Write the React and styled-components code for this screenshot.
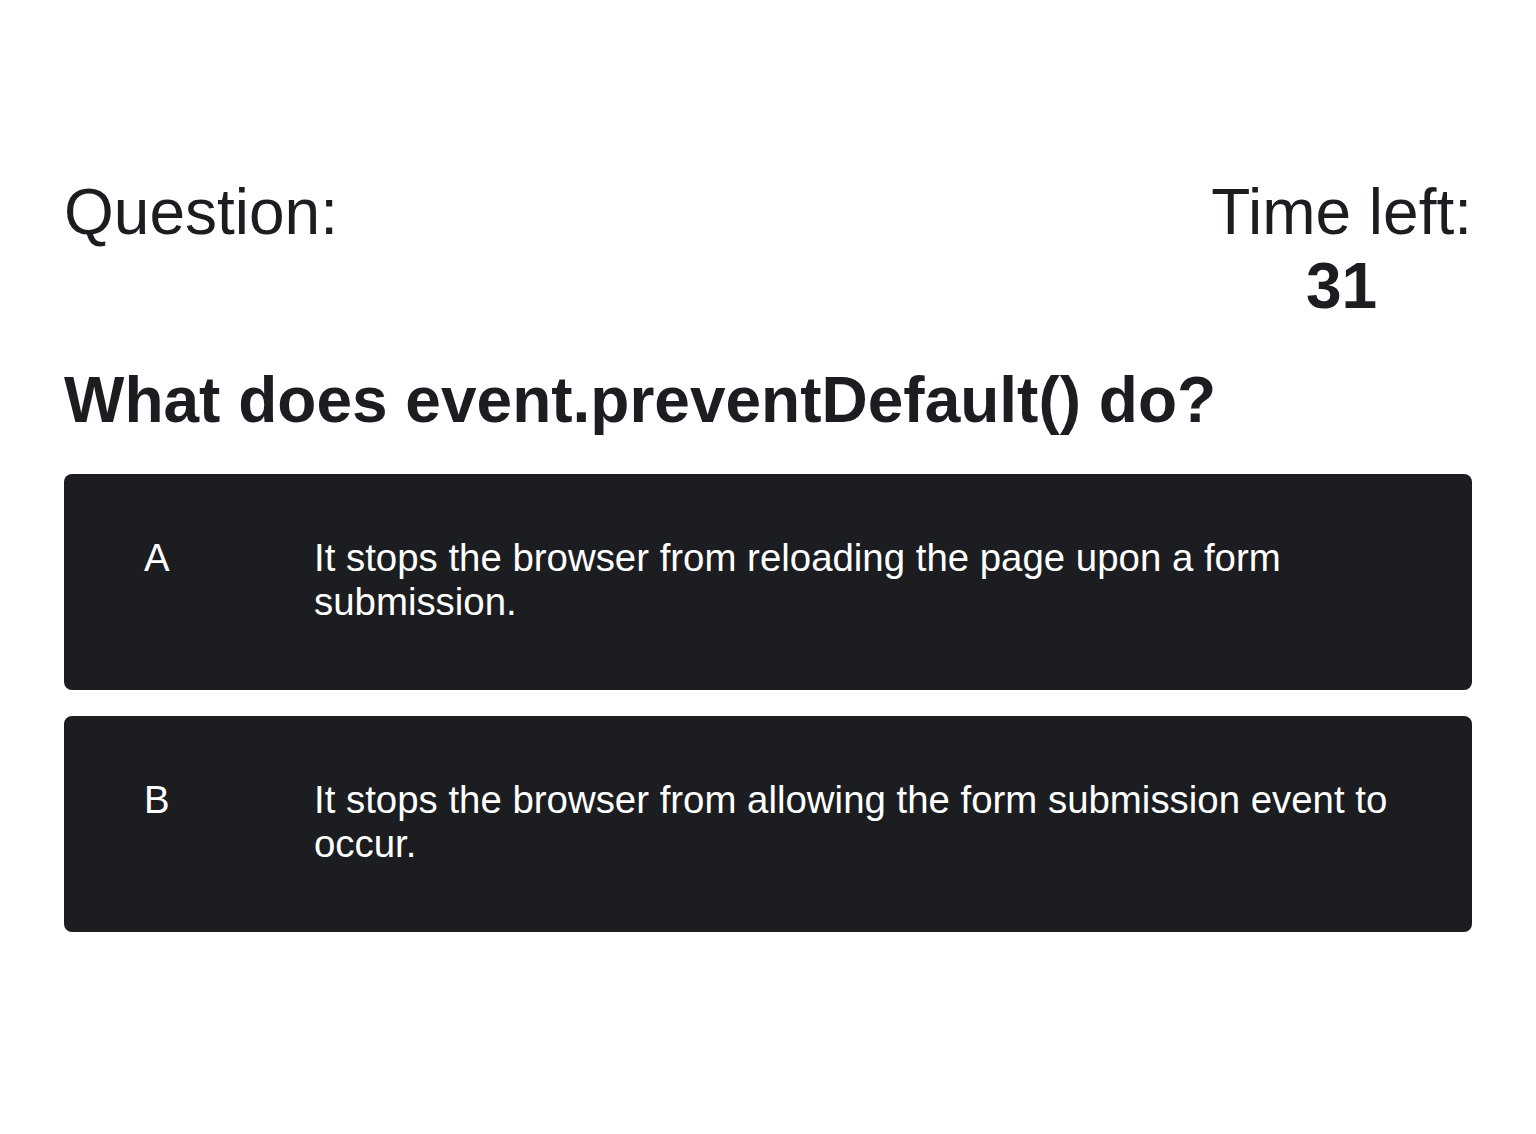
import React from 'react';
import styled, { createGlobalStyle } from 'styled-components';

const DARK = '#1c1d21';

const GlobalStyle = createGlobalStyle`
  html, body {
    margin: 0;
    padding: 0;
    background: #ffffff;
  }

  body {
    font-family: 'Liberation Sans', Arial, sans-serif;
    color: ${DARK};
  }
`;

const Page = styled.main`
  box-sizing: border-box;
  width: 100%;
  padding: 175px 64px 64px;
`;

const Header = styled.header`
  display: flex;
  justify-content: space-between;
  align-items: flex-start;
  font-size: 64px;
`;

const Label = styled.div`
  font-weight: 400;
`;

const Timer = styled.div`
  display: flex;
  flex-direction: column;
  align-items: center;
`;

const Seconds = styled.span`
  font-weight: 700;
`;

const QuestionText = styled.h2`
  margin: 40px 0 37px;
  font-size: 64px;
  font-weight: 700;
  line-height: normal;
`;

const Answers = styled.div`
  display: flex;
  flex-direction: column;
  gap: 26px;
`;

const Answer = styled.button`
  box-sizing: border-box;
  display: flex;
  align-items: flex-start;
  width: 100%;
  min-height: 216px;
  padding: 62px 80px 66px;
  border: none;
  border-radius: 8px;
  background: ${DARK};
  color: #ffffff;
  font-family: inherit;
  font-size: 38.4px;
  line-height: normal;
  text-align: left;
  cursor: pointer;
`;

const Letter = styled.span`
  flex: 0 0 170px;
`;

const AnswerText = styled.span`
  flex: 1;
`;

const answers = [
  { letter: 'A', text: 'It stops the browser from reloading the page upon a form submission.' },
  { letter: 'B', text: 'It stops the browser from allowing the form submission event to occur.' },
];

const App = () => (
  <>
    <GlobalStyle />
    <Page>
      <Header>
        <Label>Question:</Label>
        <Timer>
          <Label>Time left:</Label>
          <Seconds>31</Seconds>
        </Timer>
      </Header>
      <QuestionText>What does event.preventDefault() do?</QuestionText>
      <Answers>
        {answers.map(a => (
          <Answer key={a.letter}>
            <Letter>{a.letter}</Letter>
            <AnswerText>{a.text}</AnswerText>
          </Answer>
        ))}
      </Answers>
    </Page>
  </>
);

export default App;
